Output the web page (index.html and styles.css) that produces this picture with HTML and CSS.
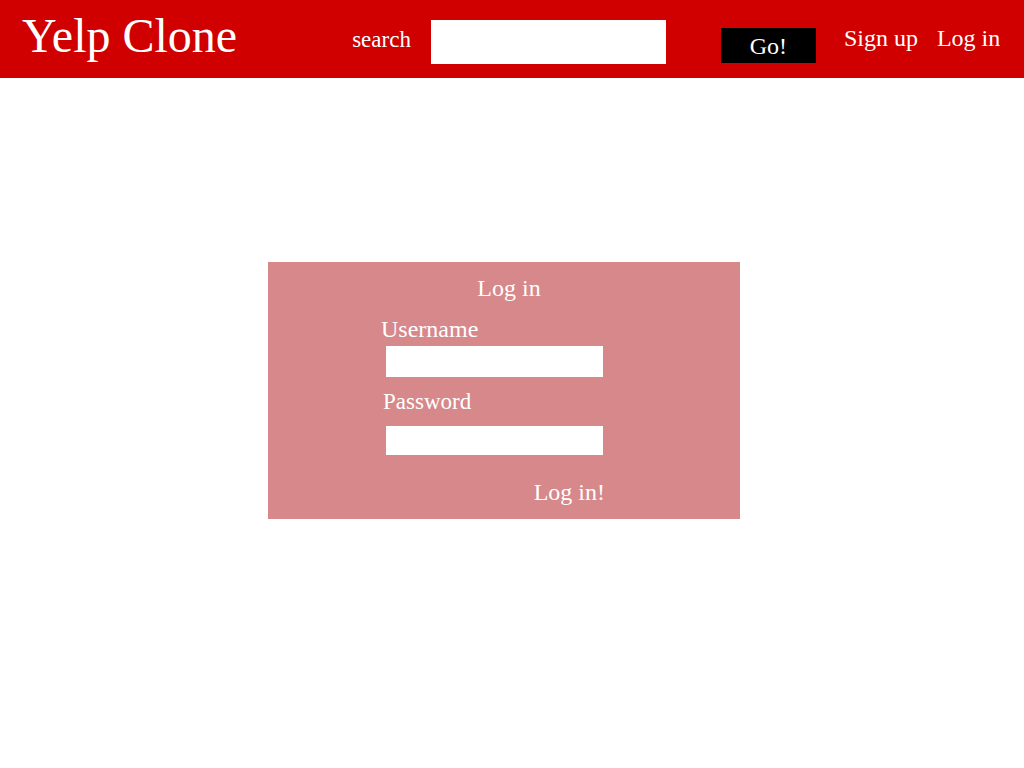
FILE: index.html
```html
<!DOCTYPE html>
<html>
<head>
<meta charset="utf-8">
<title>Yelp Clone</title>
<link rel="stylesheet" href="styles.css">
</head>
<body>
<header class="topbar">
  <h1 class="brand">Yelp Clone</h1>
  <form class="search">
    <label class="search-label">search</label>
    <input class="search-input" type="text">
    <button class="go" type="button">Go!</button>
  </form>
  <nav class="nav">
    <a class="nav-link signup" href="#">Sign up</a>
    <a class="nav-link login" href="#">Log in</a>
  </nav>
</header>
<main class="main">
  <section class="login-box">
    <h2 class="login-title">Log in</h2>
    <form class="login-form">
      <label class="field-label user-label">Username</label>
      <input class="field user-field" type="text">
      <label class="field-label pass-label">Password</label>
      <input class="field pass-field" type="password">
      <div class="submit-row"><button class="submit" type="button">Log in!</button></div>
    </form>
  </section>
</main>
</body>
</html>
```

FILE: styles.css
```css
* { box-sizing: border-box; }
html, body { margin: 0; padding: 0; background: #ffffff; }
body { font-family: "Liberation Serif", "Times New Roman", serif; color: #ffffff; }

.topbar {
  display: flex;
  align-items: flex-start;
  height: 78px;
  background: #d00000;
}
.brand {
  margin: 12px 0 0 22px;
  font-size: 48px;
  line-height: 48px;
  font-weight: normal;
  white-space: nowrap;
}
.search {
  display: flex;
  align-items: flex-start;
  margin: 0 0 0 115px;
}
.search-label {
  margin-top: 28px;
  font-size: 23px;
  line-height: 24px;
}
.search-input {
  margin: 20px 0 0 20px;
  width: 235px;
  height: 44px;
  border: none;
  padding: 0;
  background: #ffffff;
}
.go {
  margin: 28px 0 0 55px;
  width: 95px;
  height: 35px;
  border: none;
  padding: 0;
  background: #000000;
  color: #ffffff;
  font-family: inherit;
  font-size: 24px;
  line-height: 24px;
}
.nav {
  display: flex;
  margin: 26px 0 0 28px;
  gap: 19px;
}
.nav-link {
  color: #ffffff;
  text-decoration: none;
  font-size: 24px;
  line-height: 24px;
  white-space: nowrap;
}

.main {
  padding: 184px 0 0 268px;
}
.login-box {
  width: 472px;
  height: 257px;
  background: #d6888a;
  padding-top: 14px;
}
.login-title {
  margin: 0 0 0 10px;
  text-align: center;
  font-size: 24px;
  line-height: 24px;
  font-weight: normal;
}
.login-form {
  display: flex;
  flex-direction: column;
  align-items: flex-start;
  width: 224px;
  margin: 17px 0 0 113px;
}
.field-label {
  font-size: 24px;
  line-height: 24px;
}
.pass-label { margin: 13px 0 0 2px; font-size: 23px; }
.field {
  margin: 5px 0 0 5px;
  width: 217px;
  border: none;
  padding: 0;
  background: #ffffff;
}
.user-field { height: 31px; }
.pass-field { height: 29px; margin-top: 12px; }
.submit-row {
  width: 100%;
  text-align: right;
  margin-top: 25px;
}
.submit {
  border: none;
  background: transparent;
  padding: 0;
  color: #ffffff;
  font-family: inherit;
  font-size: 24px;
  line-height: 24px;
}
```
